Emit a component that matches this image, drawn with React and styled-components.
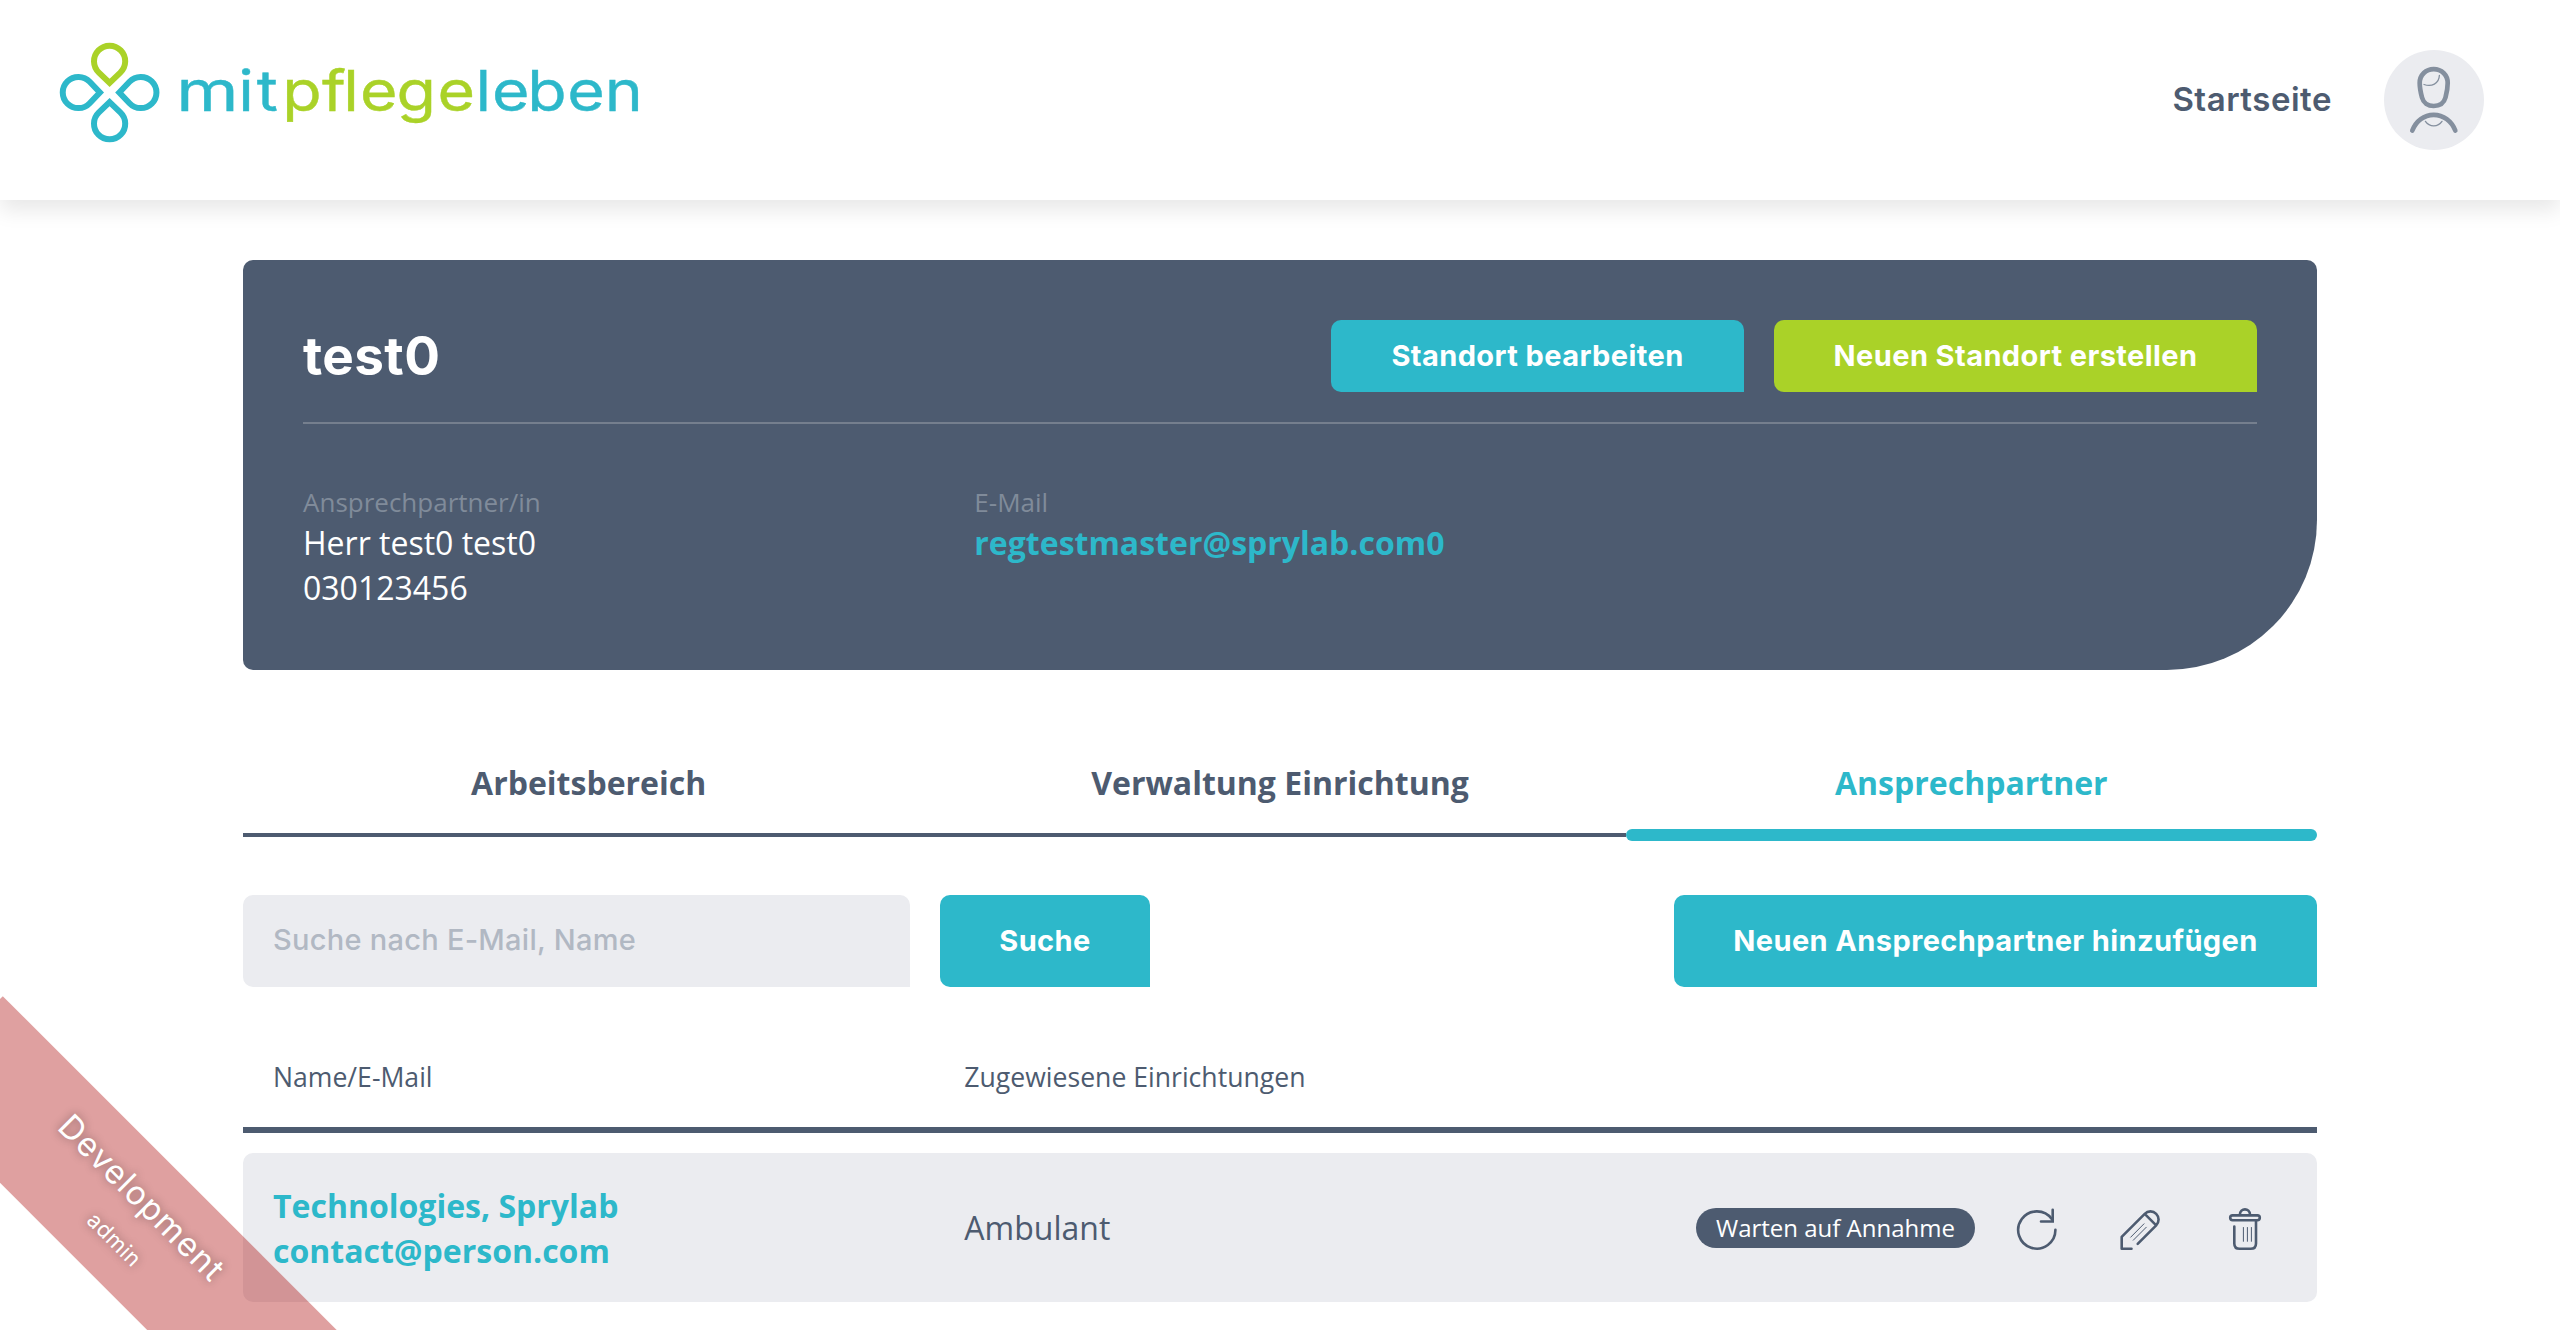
import React from 'react';
import styled, { createGlobalStyle } from 'styled-components';

const c = {
  slate: '#4d5b70',
  teal: '#2db8ca',
  green: '#aad228',
  mist: '#ebecf0',
  muted: '#808b9a',
  rule: '#757f8e',
  avatar: '#848f9e',
  placeholder: '#b1b8c3',
};
const heading = "'Inter', 'Liberation Sans', sans-serif";
const body = "'Open Sans', 'Noto Sans', sans-serif";

const GlobalStyle = createGlobalStyle`
  *, *::before, *::after { box-sizing: border-box; }
  html, body { margin: 0; background: #fff; }
  body { color: ${c.slate}; font-family: ${body}; font-size: 32px; line-height: 45px; }
`;

const Page = styled.div`
  position: relative;
  height: 1330px;
  overflow: hidden;
`;

const Header = styled.header`
  display: flex;
  justify-content: space-between;
  height: 200px;
  padding: 0 76px 0 60px;
  background: #fff;
  box-shadow: 0 10px 20px rgba(0, 0, 0, 0.095);
`;

const LogoSvg = styled.svg`
  display: block;
  width: 590px;
  height: 110px;
  margin-top: 43px;
  overflow: visible;
  text {
    font-family: ${heading};
    font-size: 56px;
    font-weight: 400;
    fill: ${c.teal};
    stroke: ${c.teal};
    stroke-width: 0.4px;
  }
  tspan.accent { fill: ${c.green}; stroke: ${c.green}; }
`;

const Nav = styled.nav`
  display: flex;
  align-items: center;
  gap: 52px;
`;

const NavLink = styled.a`
  padding-bottom: 2px;
  font-family: ${heading};
  font-size: 33px;
  font-weight: 600;
  letter-spacing: 0.52px;
`;

const Avatar = styled.div`
  width: 100px;
  height: 100px;
  border-radius: 50%;
  background: ${c.mist};
  svg { display: block; }
`;

const Main = styled.main`
  width: 2074px;
  margin: 0 auto;
  padding-top: 60px;
`;

const Card = styled.section`
  padding: 60px;
  border-radius: 10px 10px 150px 10px;
  background: ${c.slate};
  color: #fff;
`;

const CardHead = styled.div`
  display: flex;
  align-items: center;
  gap: 30px;
  padding-bottom: 30px;
  border-bottom: 2px solid ${c.rule};
`;

const Title = styled.h1`
  flex: 1;
  margin: 0;
  font: 700 53px/72px ${heading};
  letter-spacing: 0.4px;
`;

const Button = styled.button`
  width: ${(p) => p.$width}px;
  height: ${(p) => (p.$tall ? 92 : 72)}px;
  padding: 0;
  border: 0;
  border-radius: 10px 10px 0 10px;
  background: ${(p) => (p.$green ? c.green : c.teal)};
  color: #fff;
  font: 700 29px/40px ${heading};
  letter-spacing: 0.4px;
  white-space: nowrap;
`;

const InfoGrid = styled.div`
  display: grid;
  grid-template-columns: repeat(3, 1fr);
  gap: 60px;
  padding-top: 60px;
`;

const Label = styled.div`
  color: ${c.muted};
  font-size: 26px;
  line-height: 36px;
`;

const Link = styled.a`
  display: block;
  color: ${c.teal};
  font-weight: 700;
`;

const Tabs = styled.div`
  display: flex;
  margin-top: 90px;
`;

const Tab = styled.div`
  flex: 1;
  color: ${(p) => (p.$active ? c.teal : c.slate)};
  font-weight: 700;
  text-align: center;
  &::after {
    content: '';
    display: block;
    height: ${(p) => (p.$active ? 12 : 4)}px;
    margin-top: ${(p) => (p.$active ? 24 : 28)}px;
    border-radius: ${(p) => (p.$active ? 6 : 0)}px;
    background: currentColor;
  }
`;

const Toolbar = styled.form`
  display: flex;
  gap: 30px;
  margin-top: 54px;
`;

const SearchInput = styled.input`
  width: 667px;
  height: 92px;
  padding: 0 30px 4px;
  border: 0;
  border-radius: 10px 10px 0 10px;
  background: ${c.mist};
  font: 500 29px/40px ${heading};
  letter-spacing: 0.27px;
  &::placeholder { color: ${c.placeholder}; opacity: 1; }
`;

const Spacer = styled.div`
  flex: 1;
`;

const TableRow = styled.div`
  display: grid;
  grid-template-columns: repeat(3, 1fr);
  align-items: center;
`;

const TableHead = styled(TableRow)`
  margin-top: 72px;
  padding-bottom: 32px;
  border-bottom: 6px solid ${c.slate};
  font-size: 26.6px;
  line-height: 36px;
`;

const Entry = styled(TableRow)`
  height: 149px;
  margin-top: 20px;
  border-radius: 10px;
  background: ${c.mist};
`;

const Cell = styled.div`
  padding-left: 30px;
`;

const Actions = styled.div`
  display: flex;
  align-items: center;
  justify-content: flex-end;
  gap: 60px;
  padding-right: 50px;
`;

const Badge = styled.span`
  height: 40px;
  margin-right: -20px;
  padding: 0 20px;
  border-radius: 20px;
  background: ${c.slate};
  color: #fff;
  font-size: 24px;
  line-height: 40px;
  white-space: nowrap;
`;

const Icon = styled.svg`
  flex: none;
  width: 44px;
  height: 44px;
  overflow: visible;
  fill: none;
  stroke: ${c.slate};
  stroke-width: 2.6px;
  stroke-linecap: round;
  stroke-linejoin: round;
  .thin { stroke-width: 1px; }
`;

const Ribbon = styled.div`
  position: absolute;
  left: -115.3px;
  top: 1146.7px;
  width: 482px;
  height: 133.6px;
  padding-top: 26px;
  background: rgba(170, 0, 0, 0.373);
  color: #fff;
  font-family: ${heading};
  text-align: center;
  text-shadow: 0 0 10px rgba(0, 0, 0, 0.4);
  transform: rotate(45deg);
`;

const RibbonTitle = styled.div`
  font-size: 33px;
  font-weight: 400;
  line-height: 36px;
  letter-spacing: 1.25px;
`;

const RibbonNote = styled.div`
  padding: 15px 0 0 20px;
  font-size: 22px;
  font-weight: 400;
  line-height: 32px;
  letter-spacing: 0.5px;
`;

const petal = 'M0 0 L-10.7 -10.2 A15.6 15.6 0 1 1 10.7 -10.2 Z';

function Logo() {
  return (
    <LogoSvg viewBox="0 0 590 110" role="img" aria-label="mitpflegeleben">
      <g fill="none" stroke={c.teal} strokeWidth="6" strokeMiterlimit="10">
        <path d={petal} transform="translate(49.6 39.8)" stroke={c.green} />
        <path d={petal} transform="translate(49.6 59.2) rotate(180)" />
        <path d={petal} transform="translate(39.9 49.5) rotate(-90)" />
        <path d={petal} transform="translate(59.3 49.5) rotate(90)" />
      </g>
      <text x="91.6" y="67.7" transform="scale(1.27 1)">m</text>
      <text y="67.7" transform="scale(1.15 1)">
        <tspan x="154.9 171.1">it</tspan>
        <tspan className="accent" x="193.3 227.9 246.4 260.8 292.7 328.3">pflege</tspan>
        <tspan x="361.3 375.6 406.4 441.1 473.8">leben</tspan>
      </text>
    </LogoSvg>
  );
}

function PersonIcon() {
  return (
    <svg width="100" height="100" viewBox="0 0 100 100" fill="none" stroke={c.avatar} strokeWidth="4.7" strokeLinecap="round">
      <path d="M35.7 33C35.7 25 42 19.1 49.7 19.1S63.7 25 63.7 33C63.7 38 62.7 43 61.5 47.5C60 53 55.4 56 49.7 56S39.4 53 38 47.5C36.8 43 35.7 38 35.7 33Z" />
      <path d="M28.3 80.5C32 71 40 64.8 49.7 64.8S67.6 71 71.3 80.5" />
      <path d="M40 34.5C47.5 37 55 34 55.4 25.3M41.4 71.4C45.5 77.3 54 77.3 58 71.4" strokeWidth="1.3" />
    </svg>
  );
}

export default function App() {
  return (
    <Page>
      <GlobalStyle />
      <Header>
        <Logo />
        <Nav>
          <NavLink>Startseite</NavLink>
          <Avatar><PersonIcon /></Avatar>
        </Nav>
      </Header>
      <Main>
        <Card>
          <CardHead>
            <Title>test0</Title>
            <Button $width={413}>Standort bearbeiten</Button>
            <Button $width={483} $green>Neuen Standort erstellen</Button>
          </CardHead>
          <InfoGrid>
            <div>
              <Label>Ansprechpartner/in</Label>
              <div>Herr test0 test0</div>
              <div>030123456</div>
            </div>
            <div>
              <Label>E-Mail</Label>
              <Link>regtestmaster@sprylab.com0</Link>
            </div>
          </InfoGrid>
        </Card>
        <Tabs>
          <Tab>Arbeitsbereich</Tab>
          <Tab>Verwaltung Einrichtung</Tab>
          <Tab $active>Ansprechpartner</Tab>
        </Tabs>
        <Toolbar>
          <SearchInput placeholder="Suche nach E-Mail, Name" />
          <Button type="button" $width={210} $tall>Suche</Button>
          <Spacer />
          <Button type="button" $width={643} $tall>Neuen Ansprechpartner hinzufügen</Button>
        </Toolbar>
        <TableHead>
          <Cell>Name/E-Mail</Cell>
          <Cell>Zugewiesene Einrichtungen</Cell>
        </TableHead>
        <Entry>
          <Cell>
            <Link>Technologies, Sprylab</Link>
            <Link>contact@person.com</Link>
          </Cell>
          <Cell>Ambulant</Cell>
          <Actions>
            <Badge>Warten auf Annahme</Badge>
            <Icon viewBox="0 0 44 44">
              <path d="M40.4 23.8A18.6 18.6 0 1 1 37 13.3" />
              <path d="M37.7 3.8V15.5H26" strokeLinejoin="miter" />
            </Icon>
            <Icon viewBox="0 0 44 44">
              <path d="M12.5 42.8H2.7V30.8L25.7 7.8A8.1 8.1 0 0 1 37.2 19.3L18.7 37.8M25.7 7.8L37.2 19.3" />
              <path className="thin" d="M11.7 31.2L25 17.8M14.3 34.2L27.3 21.2" />
            </Icon>
            <Icon viewBox="0 0 44 44">
              <rect x="7.2" y="9.4" width="29.6" height="4.8" rx="2.4" />
              <path d="M16.9 8.6C16.9 1.6 27 1.6 27 8.6M11.3 20.6V37.4Q11.3 42.8 16.7 42.8H27.6Q33 42.8 33 37.4V15" />
              <path className="thin" d="M20.4 21.5V35.3M24.4 21.5V35.3M28.4 21.5V35.3" />
            </Icon>
          </Actions>
        </Entry>
      </Main>
      <Ribbon>
        <RibbonTitle>Development</RibbonTitle>
        <RibbonNote>admin</RibbonNote>
      </Ribbon>
    </Page>
  );
}
